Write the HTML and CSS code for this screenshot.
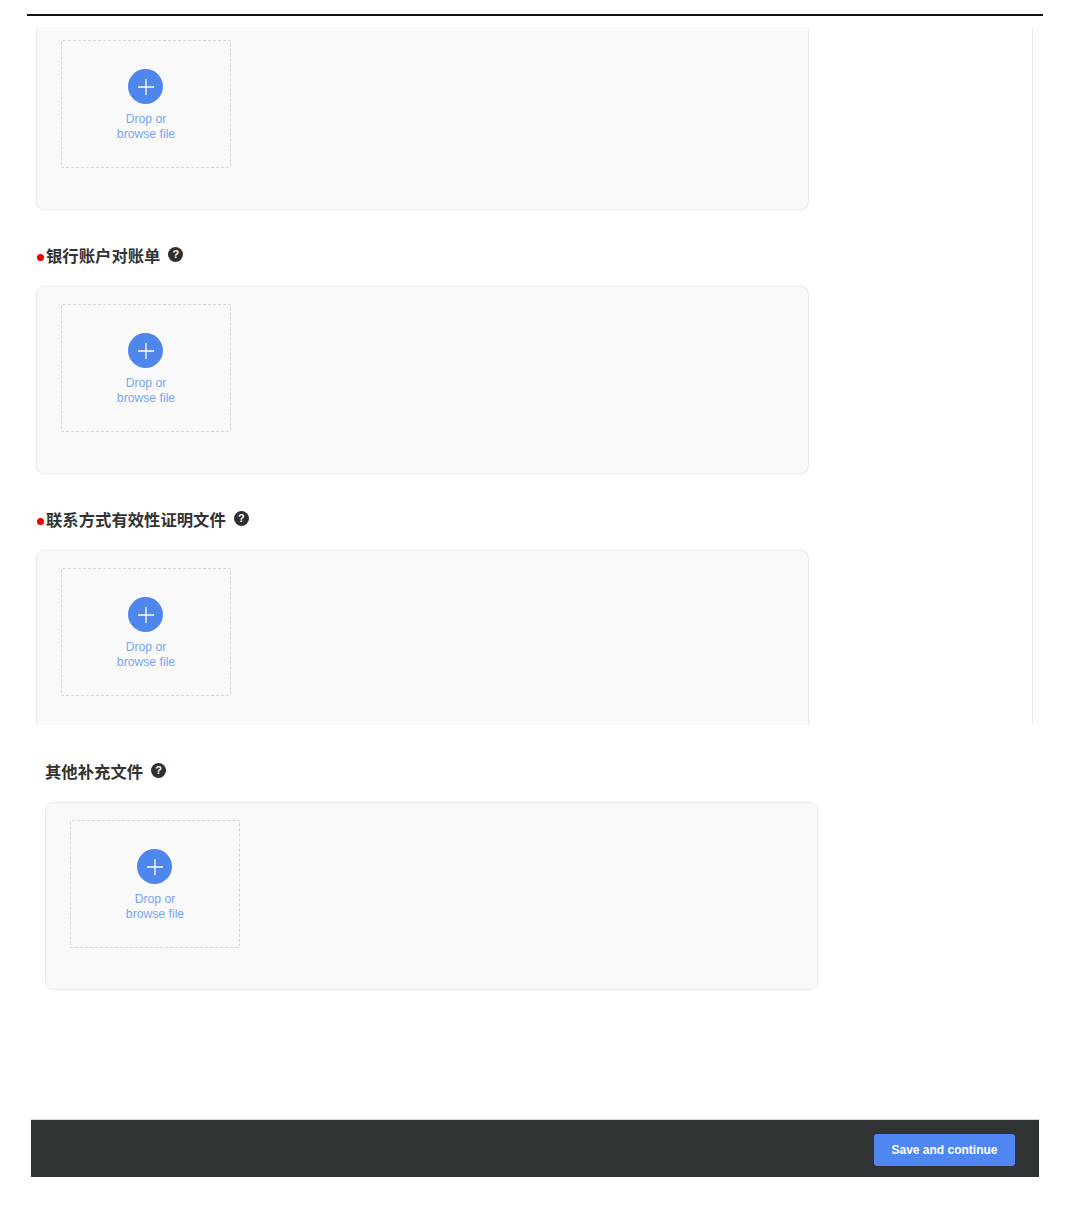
FILE: index.html
```html
<!DOCTYPE html>
<html lang="zh-CN">
<head>
    <meta charset="UTF-8">
    <meta name="viewport" content="width=device-width, initial-scale=1.0">
    <title>上传文件</title>
    <link rel="stylesheet" href="styles.css">
</head>
<body>
    <div class="top-rule"></div>

    <!-- 滚动区域：第一张卡片和右侧面板都被裁切 -->
    <div class="scroll-area">
        <div class="form-column">
            <div class="upload-card first-card">
                <button class="drop-box">
                    <span class="plus-circle"><svg width="18" height="18" viewBox="0 0 18 18"><path d="M9 1v16M1 9h16"/></svg></span>
                    <span class="drop-text">Drop or<br>browse file</span>
                </button>
            </div>

            <div class="field-label">
                <span class="required-dot"></span>
                <span class="label-text">银行账户对账单</span>
                <span class="help-icon">?</span>
            </div>
            <div class="upload-card">
                <button class="drop-box">
                    <span class="plus-circle"><svg width="18" height="18" viewBox="0 0 18 18"><path d="M9 1v16M1 9h16"/></svg></span>
                    <span class="drop-text">Drop or<br>browse file</span>
                </button>
            </div>

            <div class="field-label">
                <span class="required-dot"></span>
                <span class="label-text">联系方式有效性证明文件</span>
                <span class="help-icon">?</span>
            </div>
            <div class="upload-card">
                <button class="drop-box">
                    <span class="plus-circle"><svg width="18" height="18" viewBox="0 0 18 18"><path d="M9 1v16M1 9h16"/></svg></span>
                    <span class="drop-text">Drop or<br>browse file</span>
                </button>
            </div>
        </div>
        <div class="side-panel"></div>
    </div>

    <div class="extra-section">
        <div class="field-label extra-label">
            <span class="label-text">其他补充文件</span>
            <span class="help-icon">?</span>
        </div>
        <div class="upload-card">
            <button class="drop-box">
                <span class="plus-circle"><svg width="18" height="18" viewBox="0 0 18 18"><path d="M9 1v16M1 9h16"/></svg></span>
                <span class="drop-text">Drop or<br>browse file</span>
            </button>
        </div>
    </div>

    <div class="footer-bar">
        <button class="save-btn">Save and continue</button>
    </div>
</body>
</html>
```

FILE: styles.css
```css
body {
    margin: 0;
    background-color: #ffffff;
    font-family: "Liberation Sans", "Noto Sans CJK SC", sans-serif;
}

.top-rule {
    height: 2px;
    margin: 14px 37px 0 27px;
    background-color: #111111;
}

/* scroll area */
.scroll-area {
    display: flex;
    justify-content: space-between;
    height: 698px;
    margin-top: 11px;
    padding: 0 41px 0 36px;
    overflow: hidden;
}

.form-column {
    width: 773px;
}

.side-panel {
    width: 6px;
    background-color: #fcfcfc;
    border-left: 1px solid #ececec;
}

/* upload cards */
.upload-card {
    box-sizing: border-box;
    height: 188px;
    padding: 17px 24px;
    background-color: #f9f9f9;
    border: 1px solid #e9e9e9;
    border-radius: 8px;
}

.first-card {
    margin-top: -5px;
}

.drop-box {
    box-sizing: border-box;
    display: flex;
    flex-direction: column;
    align-items: center;
    width: 170px;
    height: 128px;
    padding: 28px 0 0;
    background: none;
    border: 1px dashed #d6d6d6;
    border-radius: 2px;
    font-family: inherit;
    cursor: pointer;
}

.plus-circle {
    display: flex;
    align-items: center;
    justify-content: center;
    width: 35px;
    height: 35px;
    margin-right: 1px;
    background-color: #4f86ec;
    border-radius: 50%;
}

.plus-circle path {
    fill: none;
    stroke: #ffffff;
    stroke-width: 1.3;
}

.drop-text {
    margin-top: 8px;
    font-size: 12.2px;
    line-height: 15px;
    color: #7ba4f6;
    text-align: center;
}

/* field labels */
.field-label {
    display: flex;
    align-items: center;
    height: 24px;
    margin: 33px 0 19px;
    padding-left: 1px;
}

.required-dot {
    width: 7px;
    height: 7px;
    margin: 5px 2px 0 0;
    background-color: #f00000;
    border-radius: 50%;
}

.label-text {
    font-size: 16.35px;
    font-weight: bold;
    color: #333333;
}

.help-icon {
    display: flex;
    align-items: center;
    justify-content: center;
    width: 15px;
    height: 15px;
    margin: -2px 0 0 8px;
    background-color: #2f2f2f;
    border-radius: 50%;
    font-size: 11px;
    font-weight: bold;
    color: #ffffff;
}

/* extra section */
.extra-section {
    width: 773px;
    margin-left: 45px;
}

.extra-label {
    margin-top: 34px;
    padding-left: 0;
}

/* footer */
.footer-bar {
    box-sizing: border-box;
    display: flex;
    align-items: center;
    justify-content: flex-end;
    height: 58px;
    margin: 129px 41px 0 31px;
    padding: 3px 24px 0 0;
    background-color: #303334;
    border-top: 1px solid #d8d8d8;
}

.save-btn {
    width: 141px;
    height: 32px;
    padding: 0;
    background-color: #4f86f2;
    border: none;
    border-radius: 3px;
    font-family: inherit;
    font-size: 12px;
    font-weight: bold;
    color: #ffffff;
    cursor: pointer;
}
```
